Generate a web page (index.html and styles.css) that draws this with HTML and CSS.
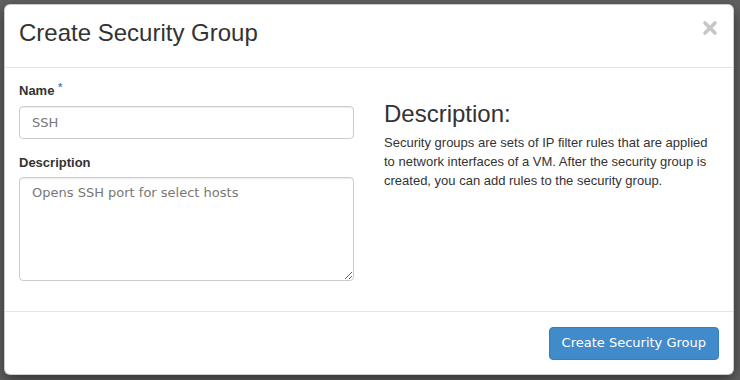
FILE: index.html
```html
<!DOCTYPE html>
<html lang="en">
<head>
    <meta charset="UTF-8">
    <meta name="viewport" content="width=device-width, initial-scale=1.0">
    <title>Create Security Group</title>
    <link rel="stylesheet" href="styles.css">
</head>
<body>
    <div class="modal">
        <div class="modal-header">
            <h3 class="modal-title">Create Security Group</h3>
            <button class="close" type="button" aria-label="Close">
                <svg width="16" height="16" viewBox="0 0 16 16">
                    <path d="M3 3 L13 13 M13 3 L3 13" stroke="currentColor" stroke-width="3.6" stroke-linecap="round"/>
                </svg>
            </button>
        </div>
        <div class="modal-body">
            <div class="col">
                <div class="form-group">
                    <label for="name">Name <span class="required">*</span></label>
                    <input id="name" class="form-control" type="text" value="SSH">
                </div>
                <div class="form-group">
                    <label for="description">Description</label>
                    <textarea id="description" class="form-control textarea">Opens SSH port for select hosts</textarea>
                </div>
            </div>
            <div class="col">
                <h3 class="help-title">Description:</h3>
                <p>Security groups are sets of IP filter rules that are applied to network interfaces of a VM. After the security group is created, you can add rules to the security group.</p>
            </div>
        </div>
        <div class="modal-footer">
            <button class="btn-primary" type="button">Create Security Group</button>
        </div>
    </div>
</body>
</html>
```

FILE: styles.css
```css
* {
    box-sizing: border-box;
}

body {
    margin: 0;
    padding: 4px 6px 6px 4px;
    background: #626262;
    font-family: "Liberation Sans", Arial, sans-serif;
    font-size: 13px;
    line-height: 1.428571;
    color: #333;
}

.modal {
    width: 730px;
    background: #fff;
    border: 1px solid rgba(0, 0, 0, 0.2);
    border-radius: 6px;
    box-shadow: 0 5px 15px rgba(0, 0, 0, 0.5);
}

.modal-header {
    display: flex;
    justify-content: space-between;
    align-items: flex-start;
    padding: 11px 15px 18px 14px;
    border-bottom: 1px solid #e5e5e5;
}

.modal-title {
    margin: 0;
    font-size: 24px;
    font-weight: 400;
    line-height: 33px;
}

.close {
    margin: 4px 0 0 0;
    padding: 0;
    border: none;
    background: none;
    color: #c6c6c6;
    cursor: pointer;
    line-height: 0;
}

.modal-body {
    display: grid;
    grid-template-columns: 1fr 1fr;
    gap: 30px;
    padding: 14px 14px 0 14px;
}

.form-group {
    margin-bottom: 15px;
}

label {
    display: block;
    margin-bottom: 5px;
    font-weight: 700;
}

.required {
    color: #428bca;
    font-size: 11px;
    line-height: 0;
    vertical-align: 4px;
}

.form-control {
    display: block;
    width: 100%;
    height: 33px;
    padding: 6px 12px;
    font-family: "DejaVu Sans", sans-serif;
    font-size: 13px;
    line-height: 18.5px;
    color: #777;
    background: #fff;
    border: 1px solid #ccc;
    border-radius: 4px;
    box-shadow: inset 0 1px 1px rgba(0, 0, 0, 0.075);
}

.textarea {
    height: 104px;
    resize: vertical;
    margin-bottom: 30px;
}

.help-title {
    margin: 19px 0 7px;
    font-size: 24px;
    font-weight: 400;
    line-height: 1.1;
}

p {
    margin: 0;
}

.modal-footer {
    display: flex;
    justify-content: flex-end;
    padding: 15px 14px 14px;
    border-top: 1px solid #e5e5e5;
}

.btn-primary {
    padding: 6px 12px;
    font-family: "DejaVu Sans", sans-serif;
    font-size: 13px;
    line-height: 18.5px;
    color: #fff;
    background: #428bca;
    border: 1px solid #357ebd;
    border-radius: 4px;
    cursor: pointer;
}
```
